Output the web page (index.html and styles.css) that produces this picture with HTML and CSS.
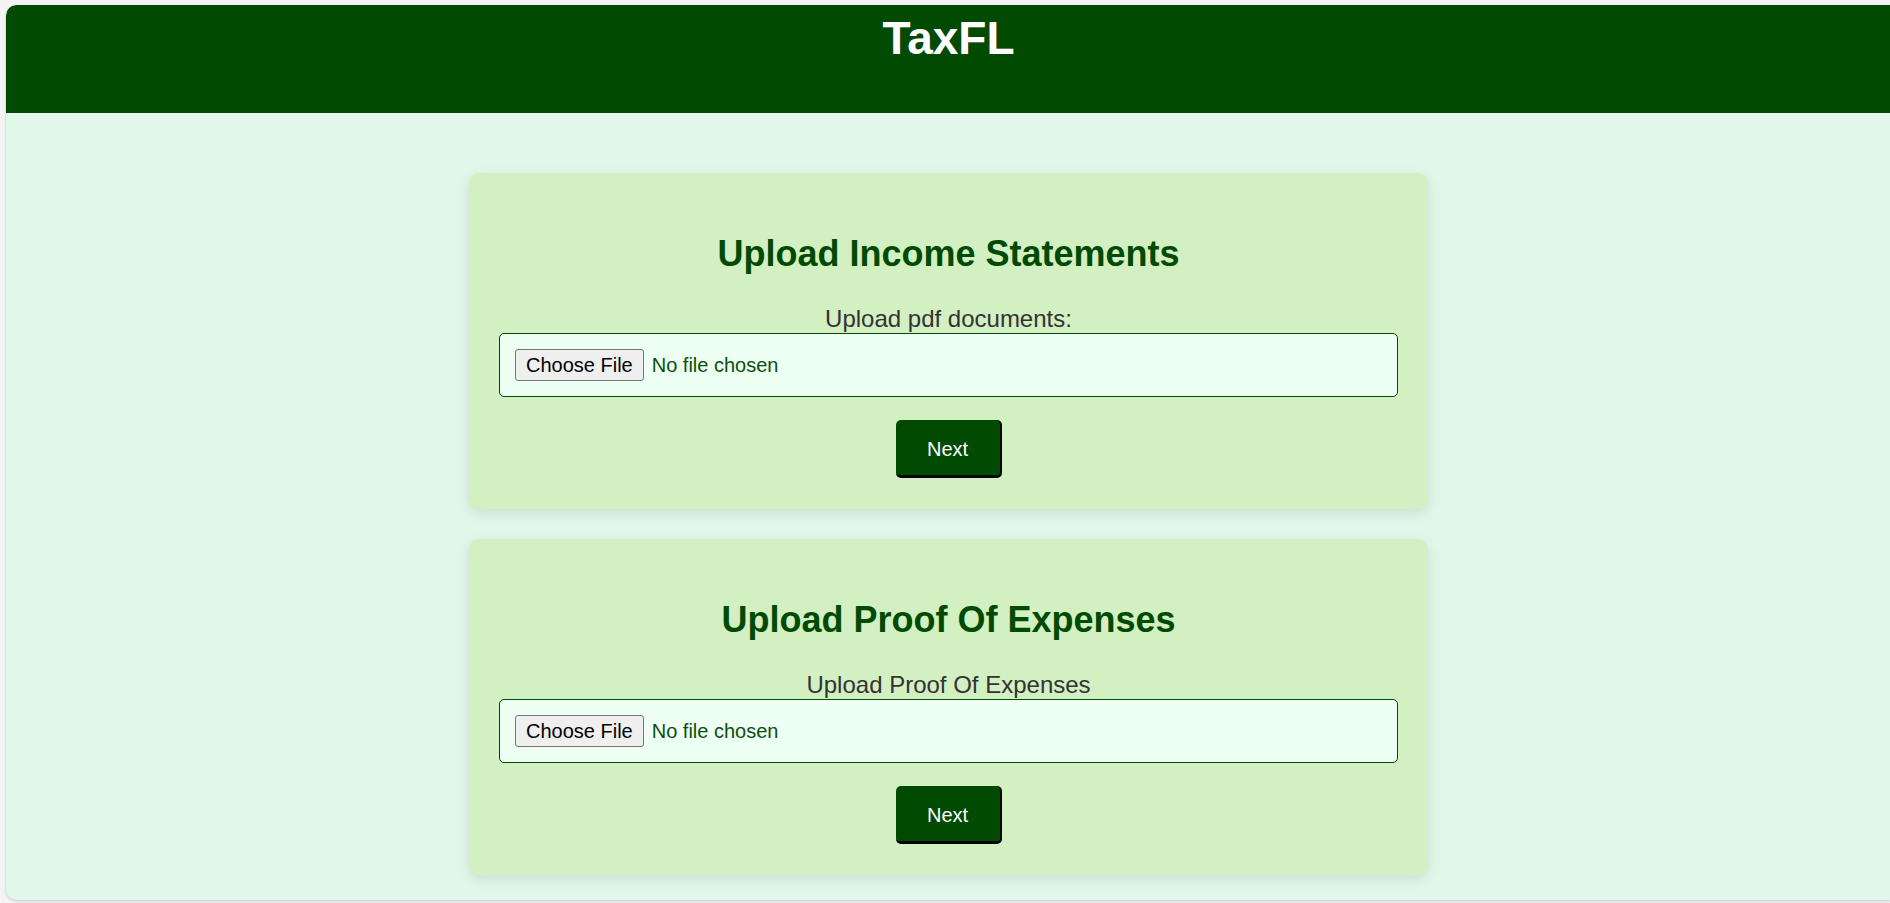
FILE: index.html
```html
<!DOCTYPE html>
<html lang="en">
<head>
<meta charset="utf-8">
<title>TaxFL</title>
<link rel="stylesheet" href="styles.css">
</head>
<body>
<div class="app">
  <header class="topbar">
    <h1 class="brand">TaxFL</h1>
  </header>
  <main class="content">
    <section class="card">
      <h2 class="card-title">Upload Income Statements</h2>
      <label class="field-label" for="income">Upload pdf documents:</label>
      <input class="file-input" type="file" id="income">
      <button class="next-btn" type="button">Next</button>
    </section>
    <section class="card">
      <h2 class="card-title">Upload Proof Of Expenses</h2>
      <label class="field-label" for="expenses">Upload Proof Of Expenses</label>
      <input class="file-input" type="file" id="expenses">
      <button class="next-btn" type="button">Next</button>
    </section>
  </main>
</div>
</body>
</html>
```
FILE: styles.css
```css
html {
  overflow: hidden;
}
body {
  margin: 0;
  padding: 5px 0 0 6px;
  background: #f4f4f4;
  font-family: "Liberation Sans", Arial, sans-serif;
  height: 903px;
  box-sizing: border-box;
}
.app {
  width: 1885px;
  height: 895px;
  background: #e1f7ea;
  border-radius: 10px 0 0 10px;
  box-shadow: 0 1px 3px rgba(0, 0, 0, 0.18);
  overflow: hidden;
  display: flex;
  flex-direction: column;
}
.topbar {
  height: 108px;
  box-sizing: border-box;
  background: #014a01;
  padding-top: 6px;
  border-radius: 10px 0 0 0;
}
.brand {
  margin: 0;
  text-align: center;
  color: #ffffff;
  font-size: 46px;
  font-weight: bold;
  line-height: normal;
}
.content {
  padding-top: 60px;
  display: flex;
  flex-direction: column;
  align-items: center;
  gap: 30px;
}
.card {
  width: 959px;
  height: 336px;
  box-sizing: border-box;
  background: #d2f0c2;
  border-radius: 10px;
  padding: 30px 30px 0;
  box-shadow: 0 4px 14px rgba(0, 0, 0, 0.1);
  display: flex;
  flex-direction: column;
  align-items: center;
}
.card-title {
  margin: 30px 0 30px;
  color: #014a01;
  font-size: 36px;
  font-weight: bold;
  line-height: normal;
}
.field-label {
  display: block;
  color: #333333;
  font-size: 24px;
  line-height: 28px;
}
.file-input {
  width: 100%;
  height: 64px;
  box-sizing: border-box;
  margin: 0;
  padding: 15px;
  border: 1px solid #014a01;
  border-radius: 5px;
  background: #eefff3;
  color: #0b4f0b;
  font-family: "Liberation Sans", Arial, sans-serif;
  font-size: 20px;
}
.file-input::file-selector-button {
  height: 32px;
  margin-right: 8px;
  padding: 0 10px;
  border: 1px solid #767676;
  border-radius: 3px;
  background: #efefef;
  color: #000000;
  font-family: "Liberation Sans", Arial, sans-serif;
  font-size: 20px;
}
.next-btn {
  margin-top: 23px;
  width: 106px;
  height: 58px;
  box-sizing: border-box;
  padding: 3px 0 0;
  border: none;
  border-right: 2px solid #000000;
  border-bottom: 3px solid #000000;
  border-radius: 5px;
  background: #014a01;
  color: #ffffff;
  font-family: "Liberation Sans", Arial, sans-serif;
  font-size: 20px;
  cursor: pointer;
}
```
